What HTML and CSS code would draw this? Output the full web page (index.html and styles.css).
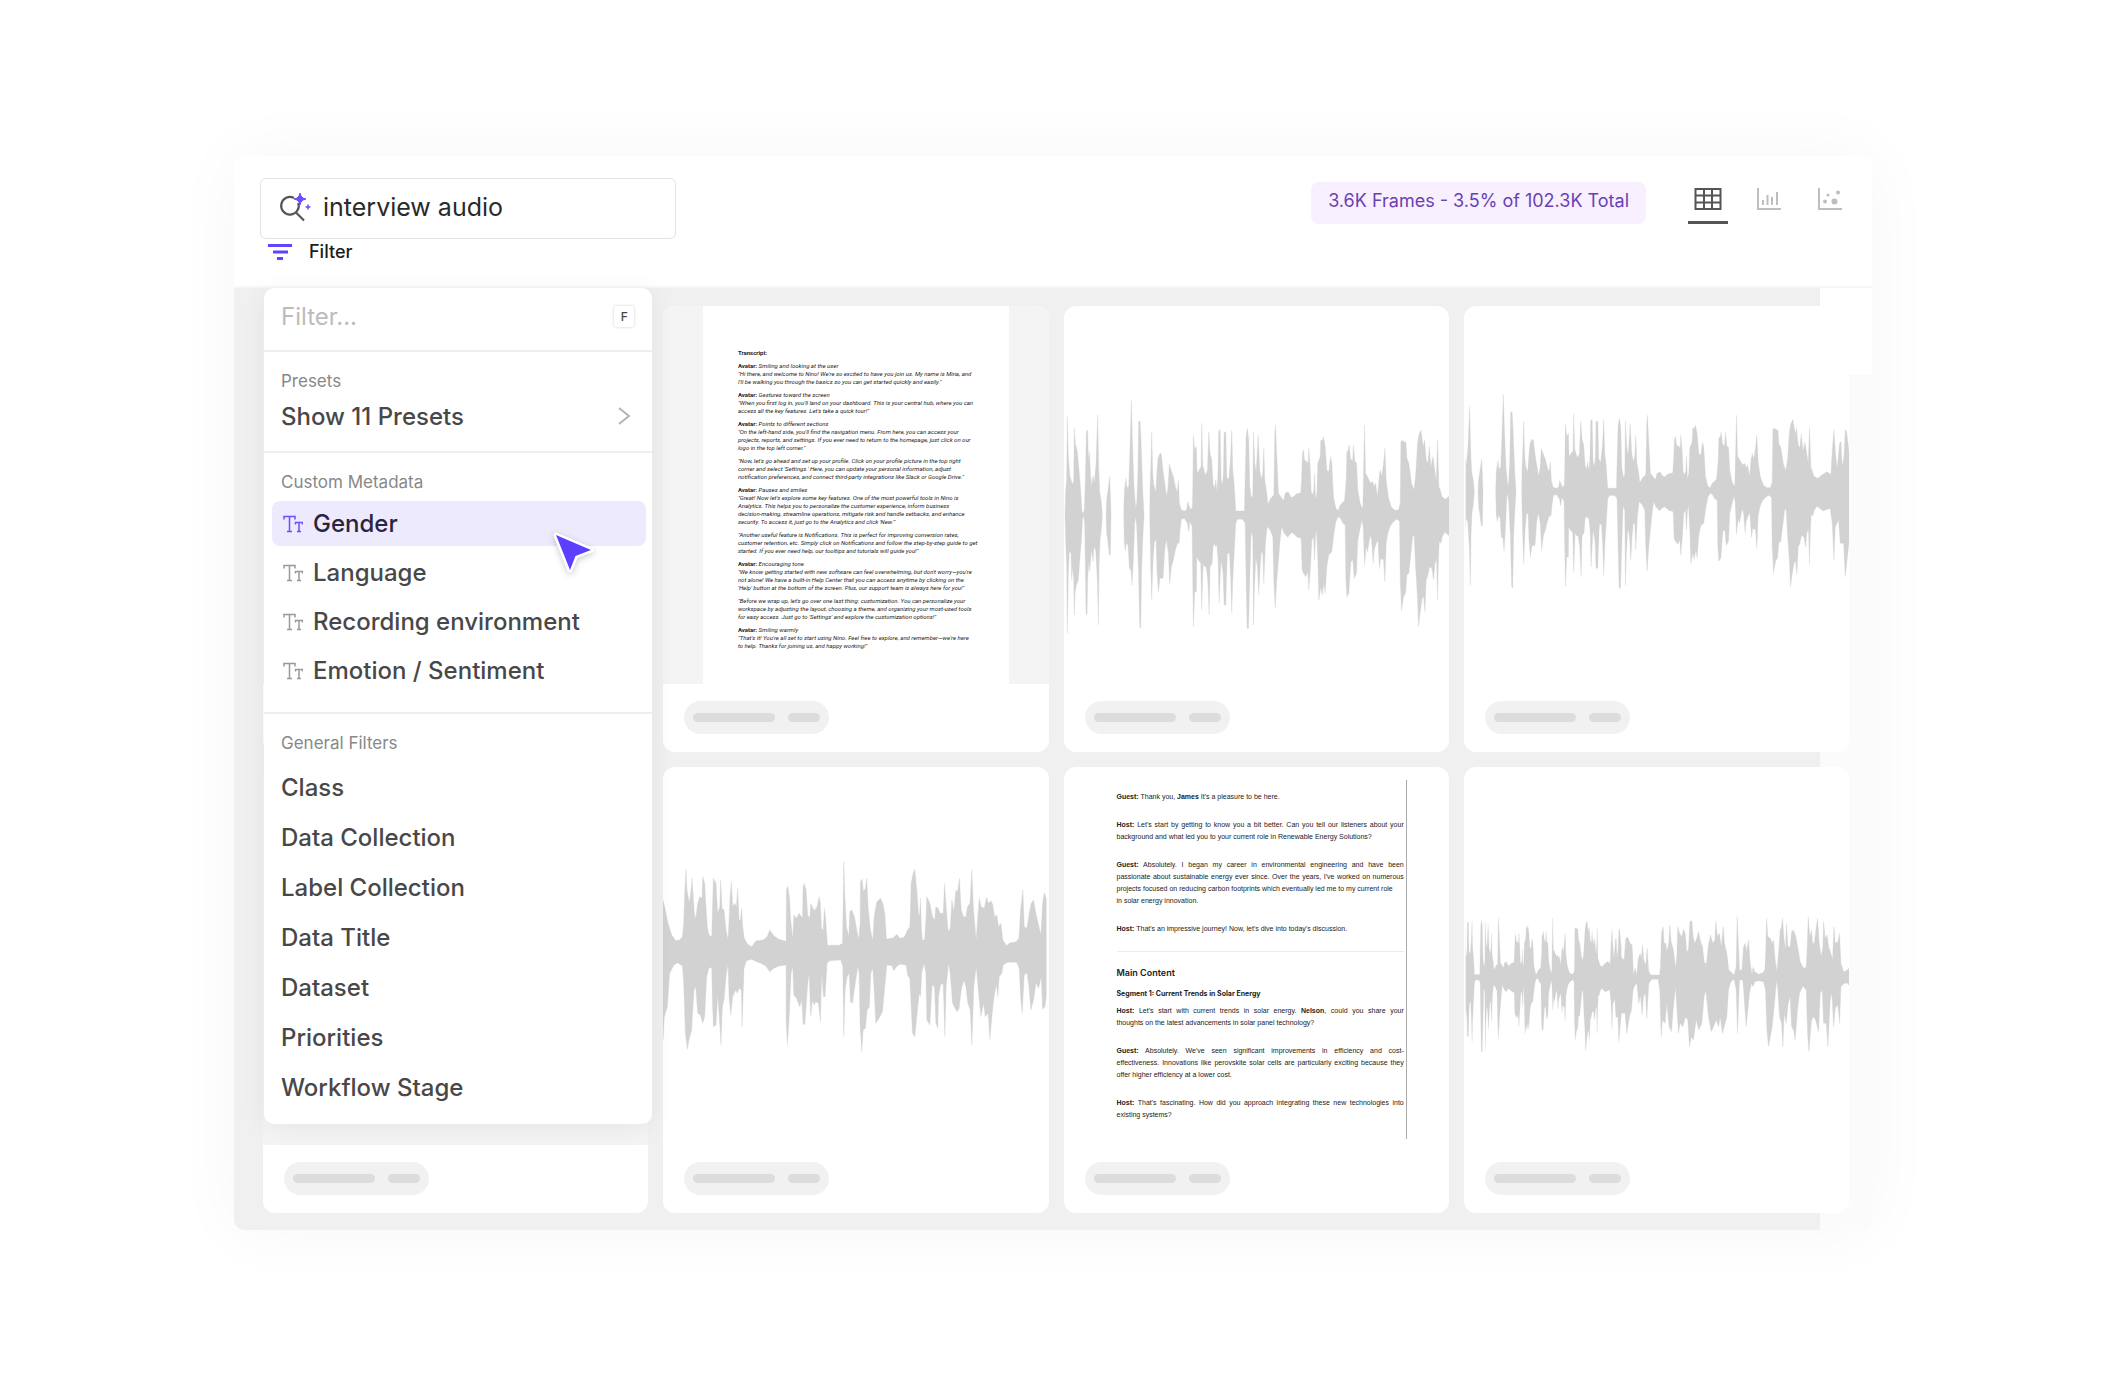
FILE: index.html
```html
<!DOCTYPE html>
<html lang="en">
    <head>
        <meta charset="utf-8">
        <title>Audio Explorer</title>
        <link rel="stylesheet" href="styles.css">
    </head>
    <body>

<!-- shared shapes -->
<svg class="defs" width="0" height="0" aria-hidden="true">
    <defs>
        <symbol id="tt" viewBox="0 0 20 18">
            <path d="M1 4.500V1.500H12V4.500M6.500 1.500V16.500M4 16.500H9M12.500 9.500V7.500H19.500V9.500M16 7.500V16.500M14 16.500H18" fill="none" stroke="currentColor" stroke-width="1.500"/>
        </symbol>
        <g id="wave">
            <path d="M15 405L17 330 20 300 22 110 25 230 30 290 37 312 41 305 43 145 46 190 52 215 57 270 62 330 66 395 68 398 70 398 73 390 76 300 79 155 83 150 85 240 88 215 92 290 95 320 99 288 103 310 108 250 113 105 116 260 119 335 124 365 127 405 124 450 120 480 117 560 115 735 112 600 107 510 102 500 99 545 95 510 92 535 89 575 86 545 83 600 81 705 78 700 76 560 74 430 71 410 68 410 65 470 60 530 55 600 48 620 45 640 43 705 41 600 38 560 35 600 33 520 28 515 25 580 22 760 20 560 17 480z"/>
            <path d="M138 405L140 360 144 330 149 290 151 340 153 405 151 525 148 525 143 480 140 460z"/>
            <path d="M191 405L193 330 198 295 201 330 203 320 206 320 210 200 214 60 217 180 222 320 227 385 230 370 233 300 236 125 240 122 243 180 248 330 252 405 249 460 245 560 242 745 239 740 235 560 230 440 227 410 224 430 220 540 216 615 213 570 208 565 204 495 199 490 196 510 193 490z"/>
            <path d="M269 405L270 320 273 240 275 155 278 280 281 315 287 335 291 270 294 235 300 220 304 222 308 265 314 310 320 350 324 320 328 252 333 270 340 290 346 320 351 335 355 300 358 370 364 390 374 393 380 388 383 365 386 375 392 390 397 380 398 320 400 165 404 210 409 200 411 280 417 270 423 260 425 130 428 255 433 275 437 285 442 270 446 155 450 220 455 240 459 312 464 325 467 300 471 335 474 270 476 155 480 148 483 300 487 315 490 280 492 158 497 155 500 290 506 300 511 240 515 150 518 270 522 310 527 393 553 393 555 300 558 170 562 145 566 180 569 320 574 355 578 345 580 155 584 250 588 275 592 210 594 165 599 270 604 300 608 280 611 205 614 300 620 340 623 373 632 355 641 345 644 160 646 135 650 230 655 340 662 350 670 362 675 340 684 335 692 350 697 353 708 342 722 338 724 300 727 220 730 210 733 240 740 245 744 250 746 205 750 260 753 335 757 345 761 330 763 280 766 360 770 340 773 250 780 230 782 180 787 182 790 170 795 200 800 270 806 275 811 230 815 250 820 350 827 385 834 392 840 375 853 362 858 300 860 215 864 212 867 195 871 235 877 245 880 195 884 245 889 248 893 330 900 370 906 385 908 380 910 280 913 135 916 280 922 290 931 310 938 305 942 320 946 310 952 350 957 290 960 270 965 290 971 240 974 205 978 300 985 355 994 382 1004 391 1015 390 1020 370 1022 185 1028 180 1032 188 1037 185 1040 235 1046 250 1054 310 1061 330 1066 290 1072 190 1076 165 1082 150 1087 185 1090 200 1093 180 1098 240 1103 250 1107 200 1112 260 1118 230 1123 265 1128 305 1132 180 1136 320 1140 330 1145 350 1156 358 1169 346 1184 334 1196 344 1200 258 1205 187 1210 270 1215 323 1222 234 1226 228 1230 317 1235 281 1239 187 1243 193 1251 270 1251 576 1239 705 1234 587 1224 587 1219 505 1209 529 1205 646 1200 517 1194 464 1172 472 1154 456 1146 470 1142 490 1137 485 1134 560 1132 660 1129 540 1124 550 1120 600 1115 565 1108 560 1102 590 1098 600 1094 695 1090 650 1086 655 1080 695 1075 740 1071 640 1066 560 1062 470 1058 465 1052 520 1046 580 1040 585 1036 640 1030 650 1024 692 1020 600 1018 425 1010 417 1000 425 990 438 983 460 978 490 974 605 970 540 962 535 958 565 953 480 948 490 942 510 939 550 934 480 930 465 922 515 918 500 913 555 909 440 905 420 900 445 893 480 889 580 882 595 878 540 872 545 866 640 860 650 857 600 855 435 848 430 841 415 834 410 827 425 820 470 815 515 806 525 800 560 795 640 791 610 786 645 782 620 776 660 773 540 769 450 766 470 763 540 760 470 755 480 751 560 746 630 743 575 737 590 730 580 726 570 723 475 712 472 697 458 690 462 683 472 672 460 665 440 661 470 655 540 650 600 645 685 641 600 638 470 630 450 621 440 616 490 611 610 608 520 604 515 600 560 596 645 592 560 587 535 583 620 580 735 578 470 573 455 569 600 565 745 561 745 558 600 555 430 548 418 532 418 527 430 522 525 518 600 515 700 512 600 508 520 502 520 499 600 497 675 492 675 489 580 483 540 480 600 477 670 474 540 470 495 466 500 464 490 459 500 456 550 450 560 447 705 443 600 438 560 433 560 429 550 425 690 422 550 415 540 410 530 409 635 404 635 400 740 398 600 396 440 392 430 389 425 386 455 382 430 373 415 364 418 360 450 357 490 352 490 346 510 340 540 334 560 329 612 325 520 319 480 314 510 309 595 300 595 295 635 291 580 288 480 283 485 279 540 275 660 272 560 270 460z"/>
        </g>
    </defs>
</svg>

<main class="window">
    <header class="toolbar">
        <div class="toolbar-left">
            <label class="search">
                <svg width="32" height="30" viewBox="0 0 32 30" aria-hidden="true">
                    <path d="M15 6A8.800 8.800 0 1 0 19.300 11M17 20.500L25 28.500" fill="none" stroke="#555" stroke-width="2.200"/>
                    <path d="M21 1Q21.800 6.200 27 7Q21.800 7.800 21 13Q20.200 7.800 15 7Q20.200 6.200 21 1z" fill="#6b4eff" stroke="#6b4eff" stroke-width="1"/>
                    <path d="M29 12.500Q29.300 14.700 31.500 15Q29.300 15.300 29 17.500Q28.700 15.300 26.500 15Q28.700 14.700 29 12.500z" fill="#6b4eff" stroke="#6b4eff" stroke-width=".6"/>
                </svg>
                <input type="text" class="search-input" value="interview audio" aria-label="Search">
            </label>
            <button class="filter-toggle">
                <svg width="24" height="16" viewBox="0 0 24 16" aria-hidden="true">
                    <path d="M0 1.500H24M5 8H20M9 14.500H15" stroke="#5f45ff" stroke-width="3"/>
                </svg>
                Filter
            </button>
        </div>
        <div class="toolbar-right">
            <span class="count">3.6K Frames - 3.5% of 102.3K Total</span>
            <nav class="views">
                <button class="view active" aria-label="Grid view">
                    <svg width="28" height="22" viewBox="0 0 28 22" fill="none" stroke="#555" stroke-width="2">
                        <path d="M1.500 1H26.500V21H1.500zM1.500 7.500H26.500M1.500 14.500H26.500M10 1V21M18 1V21"/>
                    </svg>
                </button>
                <button class="view" aria-label="Bar chart">
                    <svg width="24" height="22" viewBox="0 0 24 22" fill="none" stroke="#bdbdc2" stroke-width="2">
                        <path d="M1 0V21H24M6 12V17M10.500 7V17M15 9V17M20 4V17"/>
                    </svg>
                </button>
                <button class="view" aria-label="Scatter plot">
                    <svg width="24" height="22" viewBox="0 0 24 22" fill="#bdbdc2">
                        <path d="M1 0V21H24" fill="none" stroke="#bdbdc2" stroke-width="2"/>
                        <circle cx="10" cy="7" r="1.500"/><circle cx="20" cy="4.500" r="2"/><circle cx="7" cy="13.500" r="2"/><circle cx="16.500" cy="13.500" r="3"/>
                    </svg>
                </button>
            </nav>
        </div>
    </header>

    <section class="board">
        <div class="cards">
            <article class="card"><div class="thumb gray"></div><div class="tag"><i></i><i></i></div></article>

            <article class="card">
                <div class="thumb gray">
                    <div class="page transcript">
                        <p><b>Transcript:</b></p>
                        <p><b>Avatar:</b> <em>Smiling and looking at the user<br>"Hi there, and welcome to Nino! We're so excited to have you join us. My name is Mina, and<br>I'll be walking you through the basics so you can get started quickly and easily."</em></p>
                        <p><b>Avatar:</b> <em>Gestures toward the screen<br>"When you first log in, you'll land on your dashboard. This is your central hub, where you can<br>access all the key features. Let's take a quick tour!"</em></p>
                        <p><b>Avatar:</b> <em>Points to different sections<br>"On the left-hand side, you'll find the navigation menu. From here, you can access your<br>projects, reports, and settings. If you ever need to return to the homepage, just click on our<br>logo in the top left corner."</em></p>
                        <p><em>"Now, let's go ahead and set up your profile. Click on your profile picture in the top right<br>corner and select 'Settings.' Here, you can update your personal information, adjust<br>notification preferences, and connect third-party integrations like Slack or Google Drive."</em></p>
                        <p><b>Avatar:</b> <em>Pauses and smiles<br>"Great! Now let's explore some key features. One of the most powerful tools in Nino is<br>Analytics. This helps you to personalize the customer experience, inform business<br>decision-making, streamline operations, mitigate risk and handle setbacks, and enhance<br>security. To access it, just go to the Analytics and click 'New.'"</em></p>
                        <p><em>"Another useful feature is Notifications. This is perfect for improving conversion rates,<br>customer retention, etc. Simply click on Notifications and follow the step-by-step guide to get<br>started. If you ever need help, our tooltips and tutorials will guide you!"</em></p>
                        <p><b>Avatar:</b> <em>Encouraging tone<br>"We know getting started with new software can feel overwhelming, but don't worry—you're<br>not alone! We have a built-in Help Center that you can access anytime by clicking on the<br>'Help' button at the bottom of the screen. Plus, our support team is always here for you!"</em></p>
                        <p><em>"Before we wrap up, let's go over one last thing: customization. You can personalize your<br>workspace by adjusting the layout, choosing a theme, and organizing your most-used tools<br>for easy access. Just go to 'Settings' and explore the customization options!"</em></p>
                        <p><b>Avatar:</b> <em>Smiling warmly<br>"That's it! You're all set to start using Nino. Feel free to explore, and remember—we're here<br>to help. Thanks for joining us, and happy working!"</em></p>
                    </div>
                </div>
                <div class="tag"><i></i><i></i></div>
            </article>

            <article class="card">
                <svg class="thumb wave" viewBox="12 -222 1155 1134" preserveAspectRatio="none"><use href="#wave"/></svg>
                <div class="tag"><i></i><i></i></div>
            </article>

            <article class="card">
                <svg class="thumb wave" viewBox="12 -222 1155 1134" preserveAspectRatio="none">
                    <svg x="17" y="-222" width="1151" height="1134" viewBox="17 -222 1151 1134"><use href="#wave" transform="translate(-84 -9) scale(1 .85)"/></svg>
                </svg>
                <div class="tag"><i></i><i></i></div>
            </article>

            <article class="card"><div class="thumb gray"></div><div class="tag"><i></i><i></i></div></article>

            <article class="card">
                <svg class="thumb wave" viewBox="12 -219 1155 1134" preserveAspectRatio="none">
                    <path d="M12 180L18 205 27 250 38 285 50 302 62 300 70 290 74 250 77 160 81 88 84 150 91 190 96 150 99 115 102 160 106 220 110 238 116 190 122 170 129 175 131 110 137 130 141 200 145 260 150 285 158 290 161 180 163 115 171 130 176 220 182 200 185 120 189 205 195 210 201 270 207 300 210 240 213 170 217 125 221 200 227 190 232 200 236 145 240 240 244 240 248 205 251 260 256 295 265 312 278 320 290 303 312 300 324 290 332 270 345 288 360 298 381 304 382 150 386 138 391 170 395 240 401 298 404 225 412 235 420 220 430 235 432 140 435 130 441 150 446 225 452 235 455 190 465 212 474 200 480 170 484 190 487 265 492 270 496 205 500 240 505 316 540 316 550 310 552 200 554 65 557 160 562 260 569 290 572 215 578 210 586 230 593 270 599 298 603 250 604 125 609 118 613 155 619 145 623 115 627 200 634 270 641 300 645 230 653 185 664 175 671 190 677 220 682 297 703 293 713 283 722 295 735 292 745 270 752 260 756 130 762 100 767 88 773 150 778 220 781 230 784 175 787 270 790 300 796 300 800 240 803 170 812 190 820 230 827 240 830 200 837 205 843 220 852 220 856 130 861 200 867 275 873 265 878 180 884 215 890 150 895 155 901 115 906 210 913 230 920 230 925 200 932 190 938 90 943 210 951 300 955 240 960 175 966 200 975 205 982 172 988 190 996 183 1001 195 1006 230 1013 225 1018 260 1025 250 1031 300 1042 317 1052 308 1070 306 1079 295 1084 210 1091 150 1095 260 1103 265 1110 220 1116 190 1123 180 1130 220 1137 250 1145 285 1150 190 1155 158 1161 175 1161 470 1157 500 1150 508 1146 410 1138 445 1130 430 1123 480 1115 510 1109 440 1103 398 1095 405 1089 520 1084 470 1080 385 1072 367 1045 367 1032 375 1028 400 1020 410 1016 470 1012 435 1006 460 1000 510 992 598 987 520 978 530 973 490 965 530 958 460 951 380 944 440 938 615 933 510 926 490 920 440 914 420 906 450 900 505 893 515 880 490 873 400 868 370 861 440 857 590 852 430 844 435 838 470 836 565 830 550 826 440 819 435 812 555 803 540 800 400 795 370 788 395 784 470 780 460 767 590 760 580 756 500 752 415 745 405 741 375 722 373 712 380 704 392 698 377 683 375 678 430 670 515 660 535 650 550 645 450 641 385 635 400 631 500 624 510 619 565 612 570 608 635 603 560 600 400 596 380 590 420 580 490 574 485 570 400 564 410 558 450 554 590 551 380 545 360 512 362 504 370 498 470 493 470 488 400 484 545 478 490 470 485 465 495 460 480 455 530 450 400 446 430 437 555 432 550 428 480 422 500 412 475 404 465 401 380 396 400 390 540 385 615 381 540 381 375 360 378 345 385 332 395 320 378 305 370 292 365 278 358 262 362 255 385 249 560 247 450 240 445 235 460 230 450 221 470 215 525 210 470 207 375 202 400 195 480 190 500 186 615 180 520 176 465 171 555 163 560 160 480 158 383 150 383 143 410 137 530 131 550 124 525 116 520 110 440 105 450 98 570 90 600 85 628 79 580 74 430 70 378 62 372 56 368 45 375 32 400 25 500 16 530 12 600z"/>
                </svg>
                <div class="tag"><i></i><i></i></div>
            </article>

            <article class="card">
                <div class="thumb interview-thumb">
                    <div class="interview">
                        <p><b>Guest:</b> Thank you, <b>James</b> It's a pleasure to be here.</p>
                        <p><b>Host:</b> Let's start by getting to know you a bit better. Can you tell our listeners about your background and what led you to your current role in Renewable Energy Solutions?</p>
                        <p><b>Guest:</b> Absolutely. I began my career in environmental engineering and have been passionate about sustainable energy ever since. Over the years, I've worked on numerous projects focused on reducing carbon footprints which eventually led me to my current role <br>in solar energy innovation.</p>
                        <p><b>Host:</b> That's an impressive journey! Now, let's dive into today's discussion.</p>
                        <hr>
                        <h2>Main Content</h2>
                        <h3>Segment 1: Current Trends in Solar Energy</h3>
                        <p><span class="line"><b>Host:</b> Let's start with current trends in solar energy. <b>Nelson</b>, could you share your</span> thoughts on the latest advancements in solar panel technology?</p>
                        <p><span class="line"><b>Guest:</b> Absolutely. We've seen significant improvements in efficiency and cost-</span><span class="line">effectiveness. Innovations like perovskite solar cells are particularly exciting because they</span> offer higher efficiency at a lower cost.</p>
                        <p><b>Host:</b> That's fascinating. How did you approach integrating these new technologies into existing systems?</p>
                    </div>
                </div>
                <div class="tag"><i></i><i></i></div>
            </article>

            <article class="card">
                <svg class="thumb wave" viewBox="12 -339 1155 1134" preserveAspectRatio="none">
                    <svg x="17" y="-339" width="1151" height="1134" viewBox="17 -339 1151 1134">
                        <use href="#wave" transform="translate(-277 24) scale(.608 .66)"/>
                        <path d="M483 232L492 240 497 175 503 172 510 190 516 195 520 285 525 265 530 285 534 240 540 220 544 235 547 195 551 240 557 255 561 205 566 275 573 285 598 285 601 260 604 160 609 140 612 190 617 190 620 215 626 190 629 135 633 185 640 210 646 265 650 230 653 140 658 160 665 170 670 148 675 160 680 215 685 210 689 125 695 122 699 170 704 190 710 175 715 155 720 180 727 200 733 250 739 250 744 200 751 165 758 190 764 180 767 125 772 170 778 160 783 200 789 140 793 190 800 220 806 270 822 285 828 260 831 110 835 200 838 270 845 270 850 200 855 190 859 215 865 180 870 250 876 285 878 262 884 275 895 283 908 278 914 270 917 200 919 115 923 170 930 175 936 190 940 180 945 240 950 275 955 220 960 150 964 140 967 115 971 170 976 210 979 130 983 200 990 200 994 155 1000 150 1007 170 1014 210 1020 245 1030 265 1038 262 1041 200 1044 110 1049 170 1054 150 1057 190 1062 190 1067 150 1072 115 1077 190 1083 230 1088 200 1090 125 1095 175 1101 165 1105 200 1112 220 1117 240 1121 140 1125 190 1133 185 1138 160 1142 250 1150 275 1158 272 1168 263 1168 318 1160 308 1150 312 1142 320 1138 430 1133 375 1125 385 1120 440 1115 340 1110 360 1103 500 1098 430 1090 430 1086 330 1080 340 1075 455 1066 420 1060 410 1054 420 1046 515 1042 460 1038 330 1028 318 1018 340 1012 390 1005 480 1000 450 994 440 990 350 984 370 978 430 972 400 968 500 964 430 958 410 953 330 949 300 943 370 936 440 925 500 920 450 916 330 910 305 895 302 884 305 878 320 874 310 868 340 862 400 858 440 853 370 848 300 838 300 832 460 828 330 822 298 812 305 805 330 800 410 787 460 780 410 775 440 768 420 760 440 753 455 745 410 737 330 732 350 725 430 716 450 708 420 700 480 694 470 688 500 683 420 676 410 668 440 660 430 655 460 650 380 646 320 640 380 634 455 627 440 620 370 615 430 607 420 603 470 599 330 594 298 575 298 566 310 560 415 556 340 550 350 546 405 541 345 536 370 530 310 525 315 519 330 514 390 508 410 500 460 495 400 483 400z"/>
                    </svg>
                </svg>
                <div class="tag"><i></i><i></i></div>
            </article>
        </div>

        <!-- filter menu -->
        <aside class="menu">
            <label class="menu-search">
                <input type="text" placeholder="Filter..." aria-label="Filter">
                <kbd>F</kbd>
            </label>
            <div class="group">
                <h4>Presets</h4>
                <button class="preset">Show 11 Presets
                    <svg width="12" height="18" viewBox="0 0 12 18" aria-hidden="true"><path d="M1 1L11 9L1 17" fill="none" stroke="#b4b4b4" stroke-width="2"/></svg>
                </button>
            </div>
            <div class="group">
                <h4>Custom Metadata</h4>
                <div class="fields">
                    <button class="field selected"><svg width="20" height="18"><use href="#tt"/></svg>Gender</button>
                    <button class="field"><svg width="20" height="18"><use href="#tt"/></svg>Language</button>
                    <button class="field"><svg width="20" height="18"><use href="#tt"/></svg>Recording environment</button>
                    <button class="field"><svg width="20" height="18"><use href="#tt"/></svg>Emotion / Sentiment</button>
                </div>
            </div>
            <div class="group general">
                <h4>General Filters</h4>
                <button class="item">Class</button>
                <button class="item">Data Collection</button>
                <button class="item">Label Collection</button>
                <button class="item">Data Title</button>
                <button class="item">Dataset</button>
                <button class="item">Priorities</button>
                <button class="item">Workflow Stage</button>
            </div>
            <svg class="cursor" width="46" height="46" viewBox="0 0 46 46" aria-hidden="true">
                <path d="M5 5L40 20L24.500 26L19 40z" fill="#5b3fff" stroke="#fff" stroke-width="5" stroke-linejoin="round" paint-order="stroke"/>
            </svg>
        </aside>
    </section>
</main>

    </body>
</html>
```
FILE: styles.css
```css
* {
    box-sizing: border-box;
}

body {
    margin: 0;
    padding: 156px 234px;
    background: #fff;
    font-family: Inter, "Liberation Sans", sans-serif;
    color: #484848;
}

button, input {
    font: inherit;
    color: inherit;
    background: none;
    border: 0;
    padding: 0;
    text-align: left;
}

button { cursor: pointer; }
input { outline: 0; min-width: 0; }
h2, h3, h4, p { margin: 0; }
.defs { position: absolute; }

.window {
    border-radius: 10px;
    box-shadow: 0 0 70px rgba(0, 0, 0, 0.04);
}

/* top bar */
.toolbar {
    display: flex;
    justify-content: space-between;
    align-items: flex-start;
    height: 132px;
    padding: 22px 22px 0 26px;
    background: #fff;
    border-bottom: 2px solid #f7f7f7;
    border-radius: 10px 10px 0 0;
}

.search {
    display: flex;
    align-items: center;
    gap: 12px;
    width: 416px;
    height: 61px;
    padding: 0 18px 4px;
    border: 1px solid #e2e2e2;
    border-radius: 6px;
}

.search-input {
    flex: 1;
    font-size: 25px;
    color: #2a2a2a;
}

.filter-toggle {
    display: flex;
    align-items: center;
    gap: 17px;
    padding-left: 8px;
    line-height: 26px;
    font-size: 18px;
    font-weight: 500;
    color: #1c1c1c;
}

.toolbar-right {
    display: flex;
    gap: 42px;
    padding-top: 4px;
}

.count {
    padding: 0 17px;
    line-height: 38px;
    font-size: 18px;
    color: #6842b4;
    background: #f8f0fe;
    border-radius: 8px;
}

.views {
    display: flex;
    gap: 21px;
}

.view {
    display: flex;
    justify-content: center;
    width: 40px;
    height: 42px;
    padding-top: 6px;
    border-bottom: 3px solid transparent;
}

.view.active { border-color: #555; }

/* card grid */
.board {
    position: relative;
    padding: 18px 23px 17px 29px;
    background:
        linear-gradient(#fff, #fff) right top / 52px 87px no-repeat,
        linear-gradient(#fbfbfb, #fbfbfb) right top / 52px 100% no-repeat,
        #f0f0f0;
    border-radius: 0 0 10px 10px;
}

.cards {
    display: grid;
    grid-template-columns: repeat(4, 1fr);
    gap: 15px;
}

.card {
    height: 446px;
    background: #fff;
    border-radius: 12px;
    overflow: hidden;
}

.thumb {
    display: block;
    width: 100%;
    height: 378px;
}

.gray { background: #f4f4f4; }

.wave {
    fill: #d2d2d2;
    stroke: #d2d2d2;
    stroke-width: 1px;
    stroke-linejoin: bevel;
}

.tag {
    display: flex;
    justify-content: space-between;
    align-items: center;
    width: 145px;
    height: 33px;
    margin: 17px 21px;
    padding: 0 9px;
    background: #f1f1f1;
    border-radius: 17px;
}

.tag i {
    width: 82px;
    height: 9px;
    background: #dcdcdc;
    border-radius: 5px;
}

.tag i + i { width: 32px; }

.page {
    width: 306px;
    height: 378px;
    margin: 0 auto;
    padding: 43px 0 0 35px;
    background: #fff;
}

.transcript {
    font-family: Roboto, "Liberation Sans", sans-serif;
    font-size: 6px;
    line-height: 8px;
    color: #222;
    white-space: nowrap;
}

.transcript p { margin-bottom: 5px; }

.interview-thumb { padding: 13px 42px 6px 35px; }

.interview {
    height: 359px;
    padding: 11px 2px 0 18px;
    font-family: "Liberation Sans", Arial, sans-serif;
    font-size: 7px;
    line-height: 12px;
    color: #222;
    text-align: justify;
    border-right: 1px solid #aaa;
}

.interview p { margin-bottom: 16px; }

.line {
    display: block;
    text-align-last: justify;
}

.interview hr {
    margin: 0 0 15px;
    border: 0;
    border-top: 1px solid #ececec;
}

.interview h2, .interview h3 {
    font-family: Inter, sans-serif;
    font-weight: 600;
}

.interview h2 {
    font-size: 9px;
    margin-bottom: 9px;
}

.interview h3 {
    font-size: 7px;
    font-weight: 700;
    margin-bottom: 5px;
}

/* filter menu */
.menu {
    position: absolute;
    top: 0;
    left: 30px;
    width: 388px;
    background: #fff;
    border-radius: 10px;
    box-shadow: 0 4px 26px rgba(0, 0, 0, 0.06);
    font-size: 24px;
    font-weight: 500;
}

.menu-search {
    display: flex;
    align-items: center;
    justify-content: space-between;
    height: 64px;
    padding: 0 18px 5px 17px;
    border-bottom: 2px solid #efefef;
}

.menu-search input { font-weight: 400; }
.menu-search input::placeholder { color: #bcbcbc; }

kbd {
    width: 22px;
    line-height: 21px;
    font-family: inherit;
    font-size: 12px;
    font-weight: 500;
    text-align: center;
    border-radius: 2px;
    box-shadow: 0 0 3px rgba(0, 0, 0, 0.2);
}

.group {
    display: flex;
    flex-direction: column;
    padding: 19px 17px;
    border-bottom: 2px solid #efefef;
}

.group h4 {
    margin-bottom: 9px;
    font-size: 17px;
    font-weight: 400;
    line-height: 20px;
    color: #888;
}

.preset {
    display: flex;
    align-items: center;
    justify-content: space-between;
    height: 32px;
    padding-right: 5px;
}

.fields {
    display: flex;
    flex-direction: column;
    gap: 4px;
    margin: 0 -11px 0 -9px;
}

.field {
    display: flex;
    align-items: center;
    gap: 10px;
    height: 45px;
    padding-left: 11px;
    border-radius: 8px;
}

.field svg { color: #999; }
.field.selected { background: #eeeafe; color: #2a2440; }
.field.selected svg { color: #6b4eff; }

.general {
    padding-bottom: 12px;
    border-bottom: 0;
}

.item { height: 50px; }

.cursor {
    position: absolute;
    left: 287px;
    top: 242px;
    filter: drop-shadow(0 2px 3px rgba(0, 0, 0, 0.2));
}
```
